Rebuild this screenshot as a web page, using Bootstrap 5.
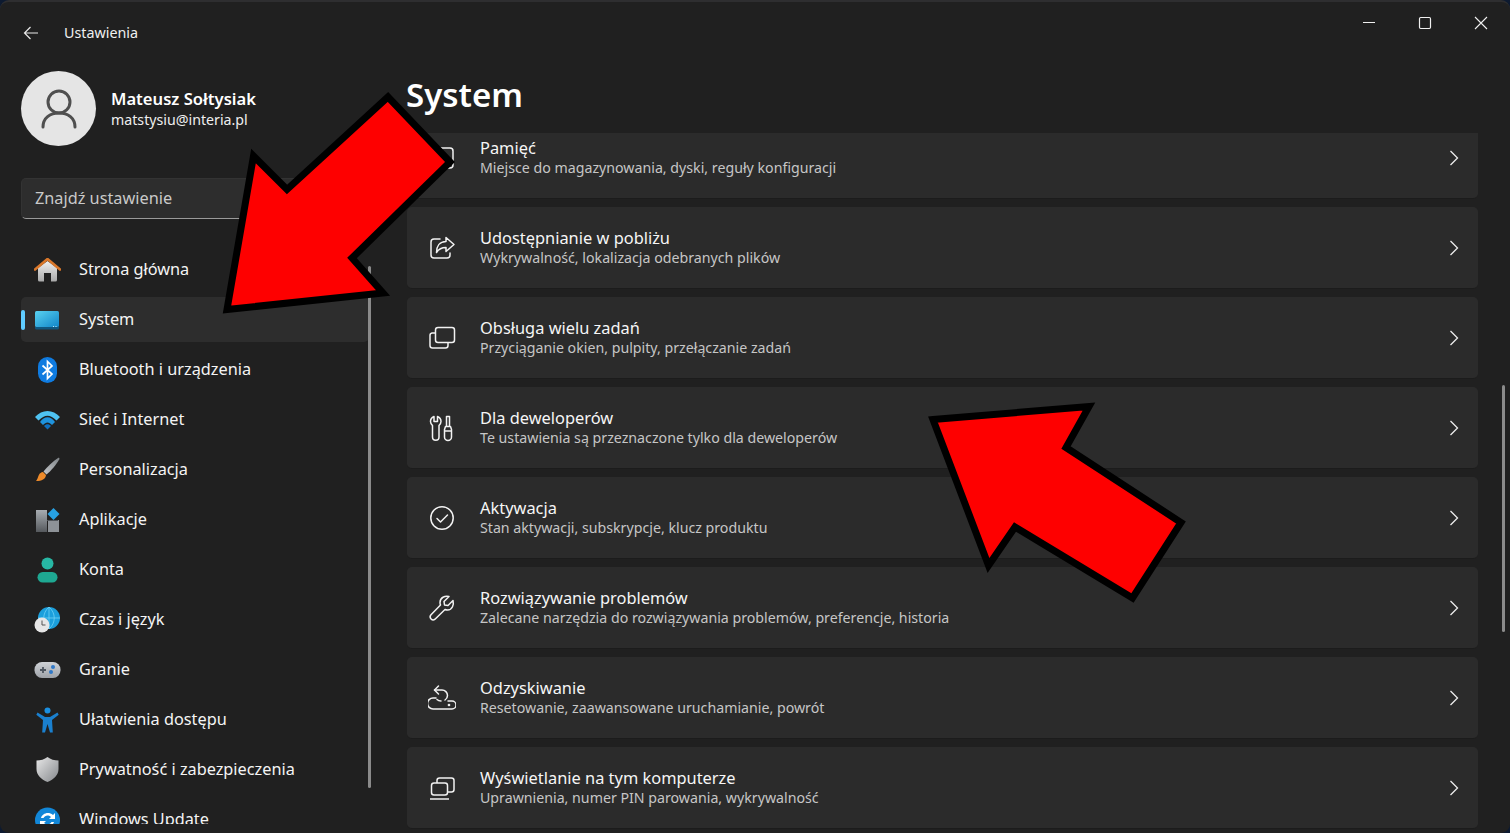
<!DOCTYPE html>
<html lang="pl">
<head>
  <meta charset="utf-8">
  <title>Ustawienia</title>
  <link rel="stylesheet" href="https://cdn.jsdelivr.net/npm/bootstrap@5.3.0/dist/css/bootstrap.min.css">
  <style>
    html, body { height: 100%; }
    body { background: #0d1a30; font-family: "Noto Sans", "Open Sans", sans-serif; color: #fff; overflow: hidden; }
    .win { height: 833px; width: 1510px; background: #202020; border-radius: 9px; border-top: 2px solid #2e2e30; }

    /* left column */
    .sidebar { width: 372px; flex: none; }
    .app-head { height: 62px; padding-left: 23px; gap: 25px; font-size: 14.3px; color: #f0f0f0; }
    .profile { padding-left: 21px; gap: 15px; height: 75px; margin-top: 7px; }
    .avatar { width: 75px; height: 75px; background: #e5e5e5; }
    .p-name { font-size: 16.6px; font-weight: 600; line-height: 22px; }
    .p-mail { font-size: 14.2px; line-height: 20px; color: #efefef; }
    .search { margin: 32px 3px 0 21px; height: 41px; background: #2d2d2d; border: 1px solid #333; border-bottom-color: #9a9a9a; border-radius: 5px; padding-left: 13px; font-size: 16.3px; color: #c9c9c9; }
    .side-nav { margin: 28px 3px 9px 21px; flex: 1 1 0; min-height: 0; gap: 5px; }
    .side-nav .nav-link { height: 45px; flex: none; padding: 0 0 0 13px; gap: 18px; color: #f4f4f4; font-size: 16.3px; border-radius: 5px; position: relative; }
    .side-nav .nav-link.active { background: #2d2d2d; }
    .side-nav .nav-link.active::before { content: ""; position: absolute; left: 0; top: 13px; width: 4px; height: 20px; border-radius: 2px; background: #60cdff; }
    .bar-side { position: absolute; left: 368px; top: 264px; width: 3px; height: 522px; background: #8b8b8b; border-radius: 2px; }

    /* right column */
    .win-ctrl { height: 62px; padding-right: 22px; gap: 42px; padding-top: 10px; }
    .page-title { font-size: 33px; font-weight: 600; line-height: 44px; margin: 9px 0 0 -1px; height: 60px; }
    .pane { padding-left: 35px; padding-right: 32px; }
    .rows { flex: 1 1 0; min-height: 0; }
    .rows-inner { margin-top: -16px; gap: 8px; }
    .row-card { height: 82px; flex: none; background: #2b2b2b; border: 0; border-bottom: 1px solid #1c1c1c; border-radius: 5px; padding: 0 19px 0 21px; flex-direction: row; align-items: center; }
    .row-ico { width: 28px; height: 28px; margin-right: 24px; flex: none; }
    .row-t { font-size: 16.4px; line-height: 21px; color: #f6f6f6; }
    .row-s { font-size: 14.2px; line-height: 20px; color: #c6c6c6; }
    .bar-main { position: absolute; left: 1502px; top: 383px; width: 3px; height: 247px; background: #8b8b8b; border-radius: 2px; }
    .arrows { position: absolute; left: 0; top: 0; pointer-events: none; }
  </style>
</head>
<body>
  <div class="win d-flex position-relative overflow-hidden">

    <aside class="sidebar d-flex flex-column">
      <div class="app-head d-flex align-items-center">
        <svg width="16" height="14" viewBox="0 0 16 14" fill="none" stroke="#e8e8e8" stroke-width="1.2"><path d="M15 7H1.5M7.5 1 1.5 7l6 6"/></svg>
        <span>Ustawienia</span>
      </div>

      <div class="profile d-flex align-items-center">
        <div class="avatar rounded-circle d-flex align-items-center justify-content-center">
          <svg width="36" height="40" viewBox="0 0 36 40" fill="none" stroke="#4f4f4f" stroke-width="3"><circle cx="18" cy="13" r="11"/><path d="M2 38c0-9 7-14 16-14s16 5 16 14" stroke-linecap="round"/></svg>
        </div>
        <div>
          <div class="p-name">Mateusz Sołtysiak</div>
          <div class="p-mail">matstysiu@interia.pl</div>
        </div>
      </div>

      <div class="search d-flex align-items-center">Znajdź ustawienie</div>

      <nav class="side-nav nav flex-column flex-nowrap overflow-hidden">
        <a class="nav-link d-flex align-items-center" href="#">
          <svg width="27" height="24" viewBox="0 0 27 24"><defs><linearGradient id="gh" x1="0" y1="0" x2="0" y2="1"><stop offset="0" stop-color="#efefef"/><stop offset="1" stop-color="#a9a9a9"/></linearGradient></defs><path d="M4 10 13.5 3 23 10v12a1.500 1.500 0 0 1-1.500 1.500H17V15h-7v8.500H5.500A1.500 1.500 0 0 1 4 22z" fill="url(#gh)"/><path d="M1 11.500 13.500 1 26 11.500" fill="none" stroke="#d9772a" stroke-width="2.600" stroke-linecap="round" stroke-linejoin="round"/></svg>
          <span>Strona główna</span>
        </a>
        <a class="nav-link active d-flex align-items-center" href="#">
          <svg width="27" height="24" viewBox="0 0 27 24"><defs><linearGradient id="gs" x1="0" y1="0" x2="1" y2="1"><stop offset="0" stop-color="#5ad2f0"/><stop offset="1" stop-color="#1186c9"/></linearGradient></defs><rect x="1" y="3" width="24" height="16" rx="1.500" fill="url(#gs)"/><path d="M1 19h24v1a1.500 1.500 0 0 1-1.500 1.500h-21A1.500 1.500 0 0 1 1 20z" fill="#10577f"/><path d="M19 18.500h1M21.500 18.500h1" stroke="#bfe9fa"/></svg>
          <span>System</span>
        </a>
        <a class="nav-link d-flex align-items-center" href="#">
          <svg width="27" height="26" viewBox="0 0 27 26"><rect x="4" y="0" width="19" height="26" rx="9.500" fill="#0f7be0"/><path d="M8.500 8.500 18 17l-4.500 4.500v-17L18 9l-9.500 8.500" fill="none" stroke="#fff" stroke-width="1.700"/></svg>
          <span>Bluetooth i urządzenia</span>
        </a>
        <a class="nav-link d-flex align-items-center" href="#">
          <svg width="27" height="20" viewBox="0 0 27 20"><path d="M1 7C8-1 19-1 26 7l-3.500 3.500C16 4 11 4 4.500 10.500z" fill="#4fc3f2"/><path d="M6 12c4-6.500 11-6.500 15 0l-3 3c-3-3.500-6-3.500-9 0z" fill="#1f93dd"/><path d="M10 16c2-2.500 5-2.500 7 0l-3.500 3.500z" fill="#0f6fbd"/></svg>
          <span>Sieć i Internet</span>
        </a>
        <a class="nav-link d-flex align-items-center" href="#">
          <svg width="27" height="26" viewBox="0 0 27 26"><defs><linearGradient id="gb" x1="1" y1="0" x2="0" y2="1"><stop offset="0" stop-color="#7f8488"/><stop offset="1" stop-color="#c4c7ca"/></linearGradient></defs><path d="M24 1c1-.5 1.800.3 1.300 1.300C22 8 17 14 12.500 17.500L9.500 14.500C13 10 18.500 4.500 24 1z" fill="url(#gb)"/><path d="M9 15l3 3c-.5 4-4 6-10 6 0 0 .5-.5 1.500-2.500C4.500 19 5 15.500 9 15z" fill="#ed8a2a"/></svg>
          <span>Personalizacja</span>
        </a>
        <a class="nav-link d-flex align-items-center" href="#">
          <svg width="27" height="24" viewBox="0 0 27 24"><defs><linearGradient id="ga" x1="0" y1="0" x2="0" y2="1"><stop offset="0" stop-color="#a7acb1"/><stop offset="1" stop-color="#55595d"/></linearGradient></defs><rect x="2" y="2" width="11" height="22" fill="url(#ga)"/><rect x="14" y="12" width="11" height="12" fill="#8d9297"/><path d="M13 12h11v1H13z" fill="#50555a"/><path d="M19.500 0 25.500 6 19.500 12 13.500 6z" fill="#27a1e3"/></svg>
          <span>Aplikacje</span>
        </a>
        <a class="nav-link d-flex align-items-center" href="#">
          <svg width="27" height="26" viewBox="0 0 27 26"><circle cx="13.500" cy="6.500" r="6" fill="#27b7a4"/><rect x="3.500" y="15" width="20" height="10.500" rx="5.200" fill="#1ea892"/></svg>
          <span>Konta</span>
        </a>
        <a class="nav-link d-flex align-items-center" href="#">
          <svg width="27" height="26" viewBox="0 0 27 26"><circle cx="15" cy="11" r="11" fill="#1b9fdc"/><path d="M15 0v22M4 11h22M15 0c-7 6-7 16 0 22M15 0c7 6 7 16 0 22" fill="none" stroke="#6fd0f5" stroke-width=".8"/><circle cx="8" cy="18" r="7.500" fill="#e6e6e6"/><path d="M8 13.500V18h3.500" fill="none" stroke="#555" stroke-width="1"/></svg>
          <span>Czas i język</span>
        </a>
        <a class="nav-link d-flex align-items-center" href="#">
          <svg width="27" height="18" viewBox="0 0 27 18"><defs><linearGradient id="gg" x1="0" y1="0" x2="0" y2="1"><stop offset="0" stop-color="#cfd2d6"/><stop offset="1" stop-color="#9ea2a8"/></linearGradient></defs><rect x=".5" y="1" width="26" height="16" rx="7.500" fill="url(#gg)"/><path d="M6 9h6M9 6v6" stroke="#4e5660" stroke-width="1.800"/><circle cx="19" cy="6" r="2" fill="#2f78c8"/><circle cx="17" cy="11" r="2" fill="#2f78c8"/></svg>
          <span>Granie</span>
        </a>
        <a class="nav-link d-flex align-items-center" href="#">
          <svg width="27" height="26" viewBox="0 0 27 26"><circle cx="13.500" cy="3.500" r="3" fill="#1a8fe0"/><path d="M3.500 5.500 11 10h5l7.500-4.500 1.200 2.300L18 13l.800 12.500h-2.800L13.500 17 11 25.500H8.200L9 13 2.300 7.800z" fill="#1a80cf"/></svg>
          <span>Ułatwienia dostępu</span>
        </a>
        <a class="nav-link d-flex align-items-center" href="#">
          <svg width="27" height="25" viewBox="0 0 27 25"><defs><linearGradient id="gp" x1="0" y1="0" x2="1" y2="1"><stop offset="0" stop-color="#e8e8e8"/><stop offset="1" stop-color="#85888c"/></linearGradient></defs><path d="M13.500 0c3 2.500 7 3.500 11 3.500V12c0 6-4.500 10.500-11 13C7 22.500 2.500 18 2.500 12V3.500c4 0 8-1 11-3.500z" fill="url(#gp)"/></svg>
          <span>Prywatność i zabezpieczenia</span>
        </a>
        <a class="nav-link d-flex align-items-center" href="#">
          <svg width="27" height="26" viewBox="0 0 27 26"><circle cx="13.500" cy="13" r="12.500" fill="#1287d8"/><path d="M7 11c1-4 7-7 12-3l2-2v6h-6l2-2c-3-2.500-6-1.500-7.500 1zM20 15c-1 4-7 7-12 3l-2 2v-6h6l-2 2c3 2.500 6 1.500 7.500-1z" fill="#fff"/></svg>
          <span>Windows Update</span>
        </a>
      </nav>
    </aside>
    <div class="bar-side"></div>

    <main class="flex-grow-1 d-flex flex-column min-w-0">
      <div class="win-ctrl d-flex justify-content-end">
        <svg class="mt-1" width="14" height="14" viewBox="0 0 14 14" fill="none" stroke="#f0f0f0" stroke-width="1.100"><path d="M1 6.500h12"/></svg>
        <svg class="mt-1" width="14" height="14" viewBox="0 0 14 14" fill="none" stroke="#f0f0f0" stroke-width="1.200"><rect x="1.500" y="1.500" width="11" height="11" rx="1.200"/></svg>
        <svg class="mt-1" width="14" height="14" viewBox="0 0 14 14" fill="none" stroke="#f0f0f0" stroke-width="1.100"><path d="M1 1l12 12M13 1 1 13"/></svg>
      </div>

      <div class="pane"><h1 class="page-title">System</h1></div>

      <div class="rows pane overflow-hidden">
        <div class="rows-inner d-flex flex-column">

          <div class="card row-card">
            <svg class="row-ico" viewBox="0 0 28 28" fill="none" stroke="#f2f2f2" stroke-width="1.500"><rect x="3" y="4" width="22" height="20" rx="3"/></svg>
            <div class="flex-grow-1"><div class="row-t">Pamięć</div><div class="row-s">Miejsce do magazynowania, dyski, reguły konfiguracji</div></div>
            <svg width="10" height="16" viewBox="0 0 10 16" fill="none" stroke="#ededed" stroke-width="1.300"><path d="M1.500 1l7 7-7 7"/></svg>
          </div>

          <div class="card row-card">
            <svg class="row-ico" viewBox="0 0 28 28" fill="none" stroke="#f2f2f2" stroke-width="1.500" stroke-linejoin="round" stroke-linecap="round"><path d="M12 5H6a3 3 0 0 0-3 3v13a3 3 0 0 0 3 3h13a3 3 0 0 0 3-3v-2"/><path d="M18 3.500 26 10.500 18 17.500v-4c-4 0-7 1-9.500 5 0-6 3-11 9.500-11z"/></svg>
            <div class="flex-grow-1"><div class="row-t">Udostępnianie w pobliżu</div><div class="row-s">Wykrywalność, lokalizacja odebranych plików</div></div>
            <svg width="10" height="16" viewBox="0 0 10 16" fill="none" stroke="#ededed" stroke-width="1.300"><path d="M1.500 1l7 7-7 7"/></svg>
          </div>

          <div class="card row-card">
            <svg class="row-ico" viewBox="0 0 28 28" fill="none" stroke="#f2f2f2" stroke-width="1.500"><rect x="7.500" y="3.500" width="19" height="15" rx="2.500"/><path d="M7.500 9H4a2.500 2.500 0 0 0-2 2.500v10A2.500 2.500 0 0 0 4.500 24h13a2.500 2.500 0 0 0 2.500-2.500v-3"/></svg>
            <div class="flex-grow-1"><div class="row-t">Obsługa wielu zadań</div><div class="row-s">Przyciąganie okien, pulpity, przełączanie zadań</div></div>
            <svg width="10" height="16" viewBox="0 0 10 16" fill="none" stroke="#ededed" stroke-width="1.300"><path d="M1.500 1l7 7-7 7"/></svg>
          </div>

          <div class="card row-card">
            <svg class="row-ico" viewBox="0 0 28 28" fill="none" stroke="#f2f2f2" stroke-width="1.500" stroke-linejoin="round"><path d="M6 2.500v5h3.500v-5c2.500 1 3.500 3 3.500 5 0 2-1 3-2 4V23a3 3 0 0 1-6.500 0V11.500c-1-1-2-2-2-4 0-2 1-4 3.500-5z"/><path d="M18.500 2.500h3v10h-3zM17.500 12.500h5l1 3V23a3.500 3.500 0 0 1-7 0v-7.500zM16.500 17h7"/></svg>
            <div class="flex-grow-1"><div class="row-t">Dla deweloperów</div><div class="row-s">Te ustawienia są przeznaczone tylko dla deweloperów</div></div>
            <svg width="10" height="16" viewBox="0 0 10 16" fill="none" stroke="#ededed" stroke-width="1.300"><path d="M1.500 1l7 7-7 7"/></svg>
          </div>

          <div class="card row-card">
            <svg class="row-ico" viewBox="0 0 28 28" fill="none" stroke="#f2f2f2" stroke-width="1.500"><circle cx="14" cy="14" r="11.200"/><path d="M9 14.500l3.500 3.500 7-7" stroke-linecap="round" stroke-linejoin="round"/></svg>
            <div class="flex-grow-1"><div class="row-t">Aktywacja</div><div class="row-s">Stan aktywacji, subskrypcje, klucz produktu</div></div>
            <svg width="10" height="16" viewBox="0 0 10 16" fill="none" stroke="#ededed" stroke-width="1.300"><path d="M1.500 1l7 7-7 7"/></svg>
          </div>

          <div class="card row-card">
            <svg class="row-ico" viewBox="0 0 28 28" fill="none" stroke="#f2f2f2" stroke-width="1.500" stroke-linejoin="round"><path d="M25 6.500l-5 5-3.500-.5-.5-3.500 5-5c-4-1-9 1-9 6 0 1 .2 2 .5 2.500L2.800 21a3 3 0 0 0 4.200 4.200l10-9.700c.5.300 1.500.5 2.500.5 5 0 6.500-5.500 5.500-9.500z"/></svg>
            <div class="flex-grow-1"><div class="row-t">Rozwiązywanie problemów</div><div class="row-s">Zalecane narzędzia do rozwiązywania problemów, preferencje, historia</div></div>
            <svg width="10" height="16" viewBox="0 0 10 16" fill="none" stroke="#ededed" stroke-width="1.300"><path d="M1.500 1l7 7-7 7"/></svg>
          </div>

          <div class="card row-card">
            <svg class="row-ico" viewBox="0 0 28 28" fill="none" stroke="#f2f2f2" stroke-width="1.500" stroke-linecap="round" stroke-linejoin="round"><path d="M10.500 2 6.500 6l4 4"/><path d="M6.500 6H14a5.500 5.500 0 0 1 5.500 5.500c0 2-1 3.500-2.500 4.500M9 15.500c1 1 2.500 1.500 4 1.500"/><path d="M8 14H5a3.500 3.500 0 0 0 0 11h19a3 3 0 0 0 0-8h-4"/><circle cx="21" cy="21" r=".6"/></svg>
            <div class="flex-grow-1"><div class="row-t">Odzyskiwanie</div><div class="row-s">Resetowanie, zaawansowane uruchamianie, powrót</div></div>
            <svg width="10" height="16" viewBox="0 0 10 16" fill="none" stroke="#ededed" stroke-width="1.300"><path d="M1.500 1l7 7-7 7"/></svg>
          </div>

          <div class="card row-card">
            <svg class="row-ico" viewBox="0 0 28 28" fill="none" stroke="#f2f2f2" stroke-width="1.500"><rect x="9" y="4" width="17" height="14" rx="2.500"/><rect x="3.500" y="9" width="16" height="12" rx="2.500" fill="#2b2b2b"/><path d="M2 25h19"/></svg>
            <div class="flex-grow-1"><div class="row-t">Wyświetlanie na tym komputerze</div><div class="row-s">Uprawnienia, numer PIN parowania, wykrywalność</div></div>
            <svg width="10" height="16" viewBox="0 0 10 16" fill="none" stroke="#ededed" stroke-width="1.300"><path d="M1.500 1l7 7-7 7"/></svg>
          </div>

        </div>
      </div>
    </main>
    <div class="bar-main"></div>
  </div>

  <!-- red arrows drawn on top of the screenshot -->
  <svg class="arrows" width="1510" height="833" viewBox="0 0 1510 833">
    <polygon points="227,309.5 253.5,156 287,189.5 388,97 450,162 352,258 383,293" fill="#fe0000" stroke="#000" stroke-width="7"/>
    <polygon points="933,419.5 1089,406.5 1066,447.5 1181,522.5 1132.5,598 1015,527 988.5,565.5" fill="#fe0000" stroke="#000" stroke-width="7"/>
  </svg>

  <script src="https://cdn.jsdelivr.net/npm/bootstrap@5.3.0/dist/js/bootstrap.bundle.min.js"></script>
</body>
</html>
